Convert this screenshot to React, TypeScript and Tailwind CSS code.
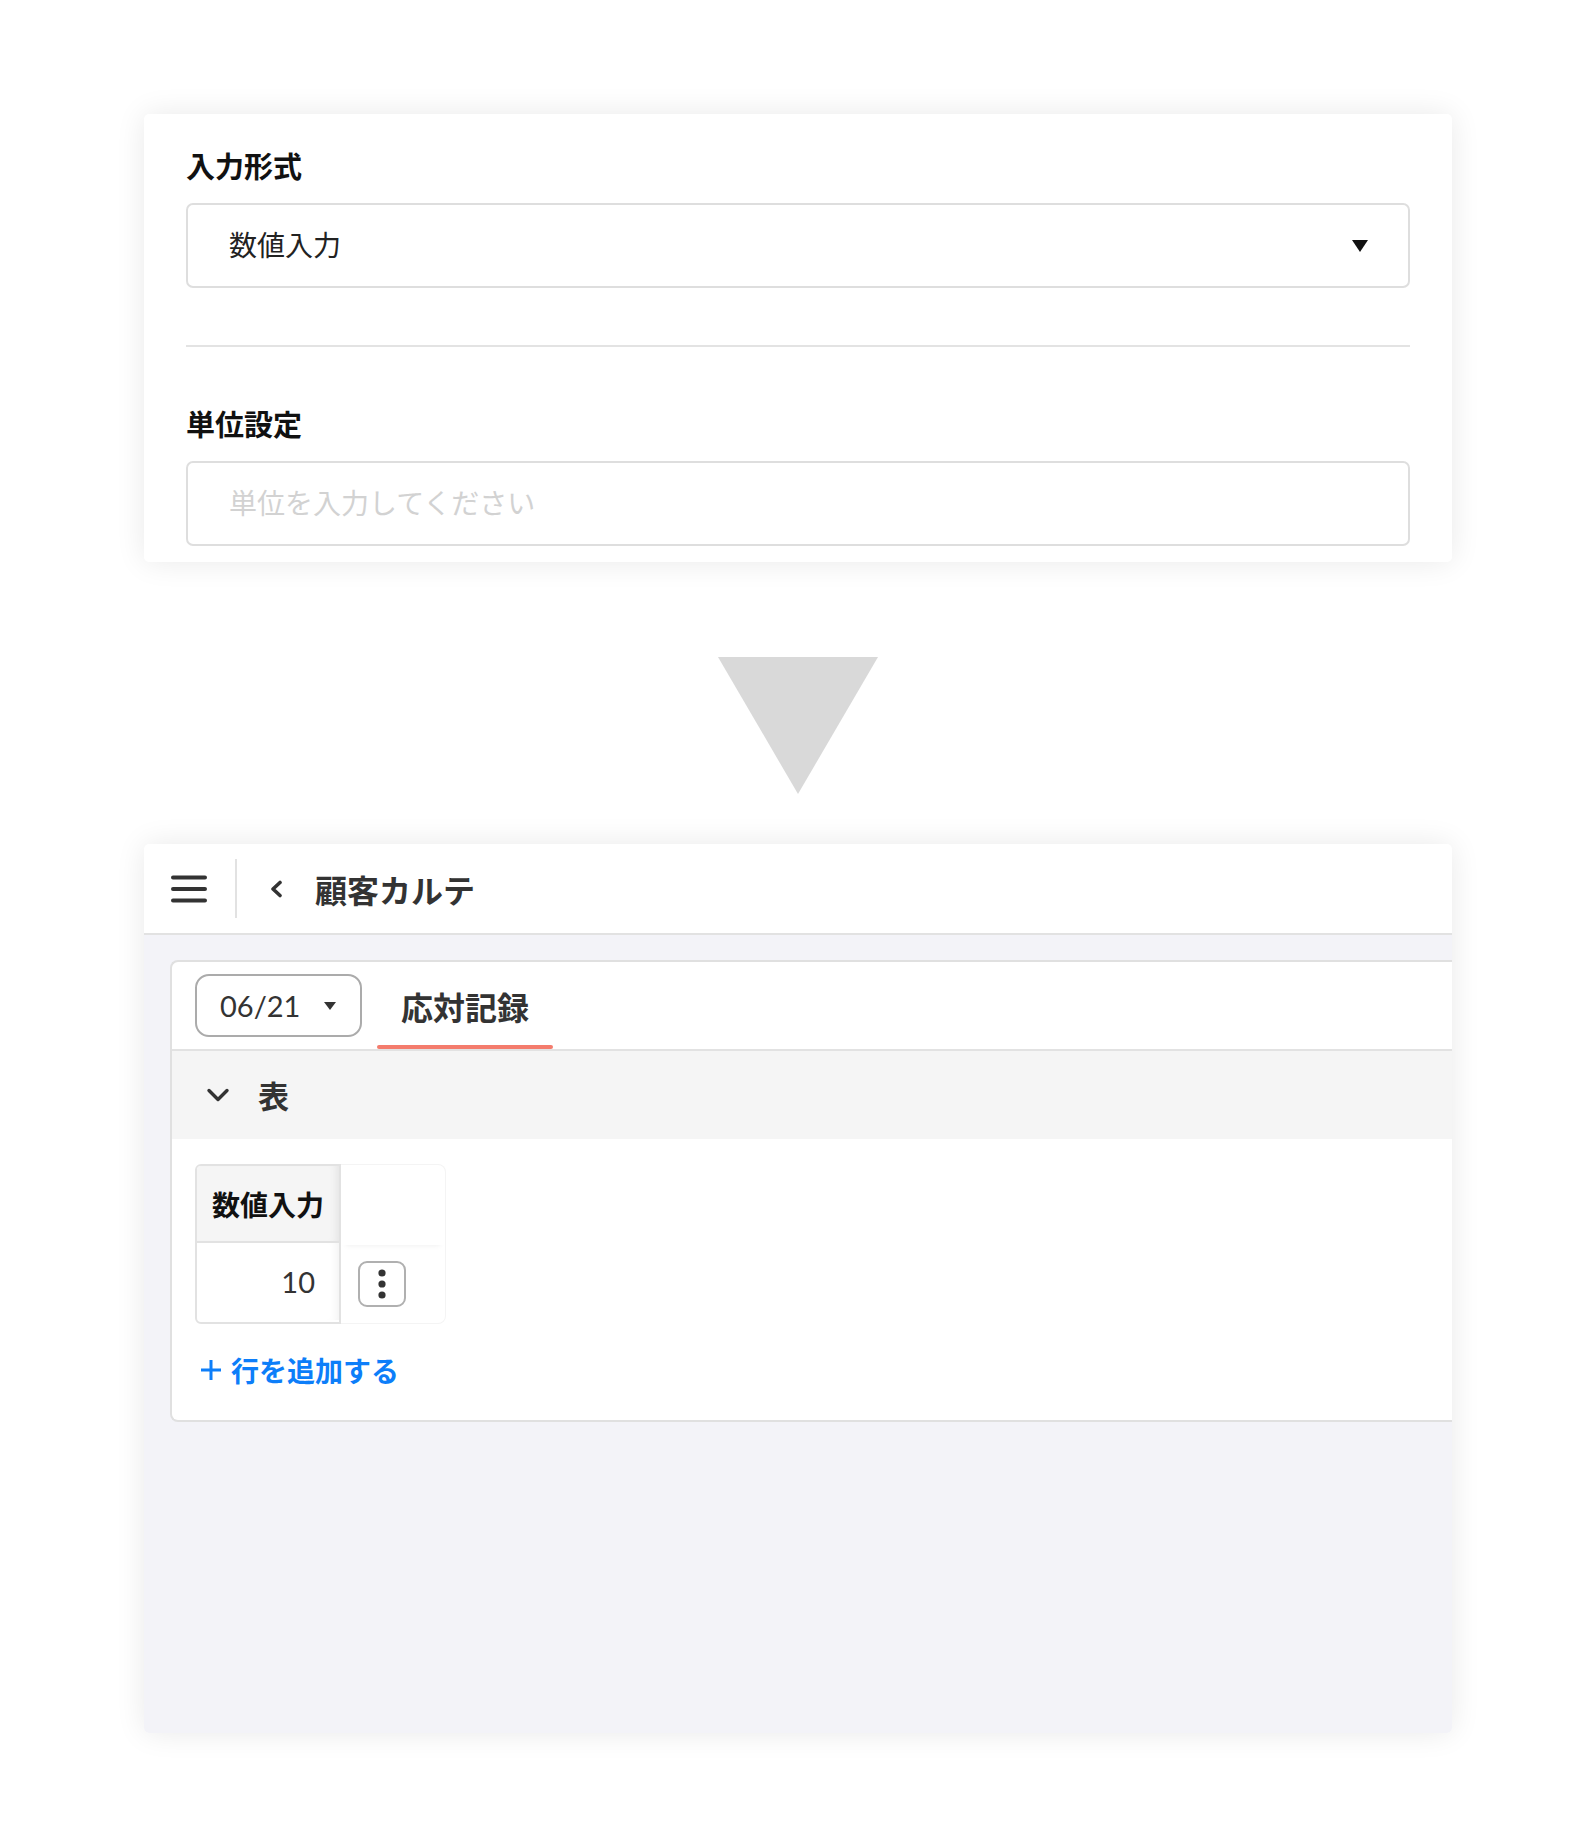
// ---- small drawn icons ----
function Hamburger() {
  return (
    <svg width="36" height="28" viewBox="0 0 36 28" fill="none">
      <path d="M2 2.5h32M2 14h32M2 25.5h32" stroke="#333" strokeWidth="4" strokeLinecap="round" />
    </svg>
  );
}

function ChevronLeft() {
  return (
    <svg width="14" height="18" viewBox="0 0 14 18" fill="none">
      <path d="M11 2.5L4 9l7 6.5" stroke="#333" strokeWidth="3.6" strokeLinecap="round" strokeLinejoin="round" />
    </svg>
  );
}

function ChevronDown() {
  return (
    <svg width="24" height="14" viewBox="0 0 24 14" fill="none">
      <path d="M3 2.5l9 9 9-9" stroke="#333" strokeWidth="3.4" strokeLinecap="round" strokeLinejoin="round" />
    </svg>
  );
}

function Caret({ w, h, color }: { w: number; h: number; color: string }) {
  return (
    <svg width={w} height={h} viewBox={`0 0 ${w} ${h}`}>
      <path d={`M0 0H${w}L${w / 2} ${h}Z`} fill={color} />
    </svg>
  );
}

function Kebab() {
  return (
    <svg width="8" height="30" viewBox="0 0 8 30">
      <circle cx="4" cy="4" r="3.6" fill="#333" />
      <circle cx="4" cy="15" r="3.6" fill="#333" />
      <circle cx="4" cy="26" r="3.6" fill="#333" />
    </svg>
  );
}

function Plus() {
  return (
    <svg width="22" height="22" viewBox="0 0 22 22" fill="none">
      <path d="M11 1v20M1 11h20" stroke="#0d7ef9" strokeWidth="3" />
    </svg>
  );
}

// ---- settings card ----
function SettingsCard() {
  return (
    <div className="rounded-[5px] bg-white px-[42px] pt-[32px] pb-[16px] shadow-[0_0_30px_rgba(0,0,0,0.09)]">
      <div className="flex h-[40px] items-center text-[29px] font-bold text-[#111]">入力形式</div>
      <div className="mt-[17px] flex h-[85px] items-center justify-between rounded-[7px] border-2 border-[#dedede] pl-[41px] pr-[40px]">
        <span className="pb-[4px] text-[28px] text-[#222]">数値入力</span>
        <Caret w={16} h={12} color="#111" />
      </div>
      <div className="mt-[57px] h-[2px] bg-[#e3e3e3]" />
      <div className="mt-[57px] flex h-[40px] items-center text-[29px] font-bold text-[#111]">単位設定</div>
      <div className="mt-[17px] flex h-[85px] items-center rounded-[7px] border-2 border-[#dedede] pl-[41px]">
        <span className="pb-[4px] text-[28px] text-[#d2d2d2]">単位を入力してください</span>
      </div>
    </div>
  );
}

// ---- record screen ----
function RecordScreen() {
  return (
    <div className="flex h-[889px] flex-col overflow-hidden rounded-[5px] bg-white shadow-[0_0_30px_rgba(0,0,0,0.09)]">
      {/* Header */}
      <div className="flex h-[91px] shrink-0 items-center border-b-2 border-[#e2e2e2] pl-[27px]">
        <Hamburger />
        <div className="ml-[28px] h-[59px] w-[2px] bg-[#e2e2e2]" />
        <div className="ml-[32px]">
          <ChevronLeft />
        </div>
        <div className="ml-[32px] text-[32px] font-bold text-[#333]">顧客カルテ</div>
      </div>

      {/* Body */}
      <div className="flex-1 bg-[#f3f3f8] pt-[25px] pl-[26px]">
        <div className="rounded-l-[8px] border-y-2 border-l-2 border-[#e0e0e0] bg-white">
          {/* Tabs */}
          <div className="flex h-[89px] items-stretch border-b-2 border-[#e2e2e2] pl-[23px]">
            <div className="flex items-center">
              <div className="flex h-[63px] w-[167px] items-center rounded-[14px] border-2 border-[#ababab] pl-[23px]">
                <span className="font-['Lato',sans-serif] text-[29px] text-[#333]">06/21</span>
                <span className="ml-[24px]">
                  <Caret w={12} h={8} color="#333" />
                </span>
              </div>
            </div>
            <div className="ml-[15px] flex w-[176px] flex-col">
              <div className="flex flex-1 items-center justify-center pt-[4px] text-[32px] font-bold text-[#333]">応対記録</div>
              <div className="h-[4px] rounded-full bg-[#f47c6d]" />
            </div>
          </div>

          {/* Section header */}
          <div className="flex h-[88px] items-center bg-[#f5f5f5] pl-[34px]">
            <ChevronDown />
            <span className="ml-[28px] text-[31px] font-bold text-[#333]">表</span>
          </div>

          {/* Table */}
          <div className="pl-[23px] pt-[25px]">
            <div className="flex w-fit">
              <div className="w-[146px] overflow-hidden rounded-l-[6px] border-2 border-[#e2e2e2]">
                <div className="flex h-[77px] items-center justify-center border-b-2 border-[#e2e2e2] bg-[#f5f5f5] text-[28px] font-bold text-[#111] shadow-[inset_-8px_0_8px_-6px_rgba(0,0,0,0.08)]">
                  数値入力
                </div>
                <div className="flex h-[77px] items-center justify-end pr-[24px] font-['Lato',sans-serif] text-[29px] text-[#333] shadow-[inset_-8px_0_8px_-6px_rgba(0,0,0,0.06)]">
                  10
                </div>
              </div>
              <div className="w-[105px] rounded-r-[8px] border border-l-0 border-[#f4f4f4]">
                <div className="h-[80px] shadow-[0_5px_6px_-5px_rgba(0,0,0,0.08)]" />
                <div className="flex h-[78px] items-center pl-[17px]">
                  <div className="flex h-[46px] w-[48px] items-center justify-center rounded-[9px] border-2 border-[#b0b0b0]">
                    <Kebab />
                  </div>
                </div>
              </div>
            </div>
          </div>

          {/* Add row */}
          <div className="mt-[26px] flex h-[40px] items-center pl-[28px]">
            <Plus />
            <span className="ml-[9px] text-[28px] font-bold text-[#0d7ef9]">行を追加する</span>
          </div>
          <div className="h-[30px]" />
        </div>
      </div>
    </div>
  );
}

export default function App() {
  return (
    <div className="min-h-[1848px] w-full bg-white font-['Noto_Sans_CJK_JP',sans-serif]">
      <div className="mx-auto w-[1308px] pt-[114px]">
        <SettingsCard />
        <div className="mt-[95px] mb-[50px] flex justify-center">
          <svg width="160" height="137" viewBox="0 0 160 137">
            <path d="M0 0H160L80 137Z" fill="#d9d9d9" />
          </svg>
        </div>
        <RecordScreen />
      </div>
    </div>
  );
}
